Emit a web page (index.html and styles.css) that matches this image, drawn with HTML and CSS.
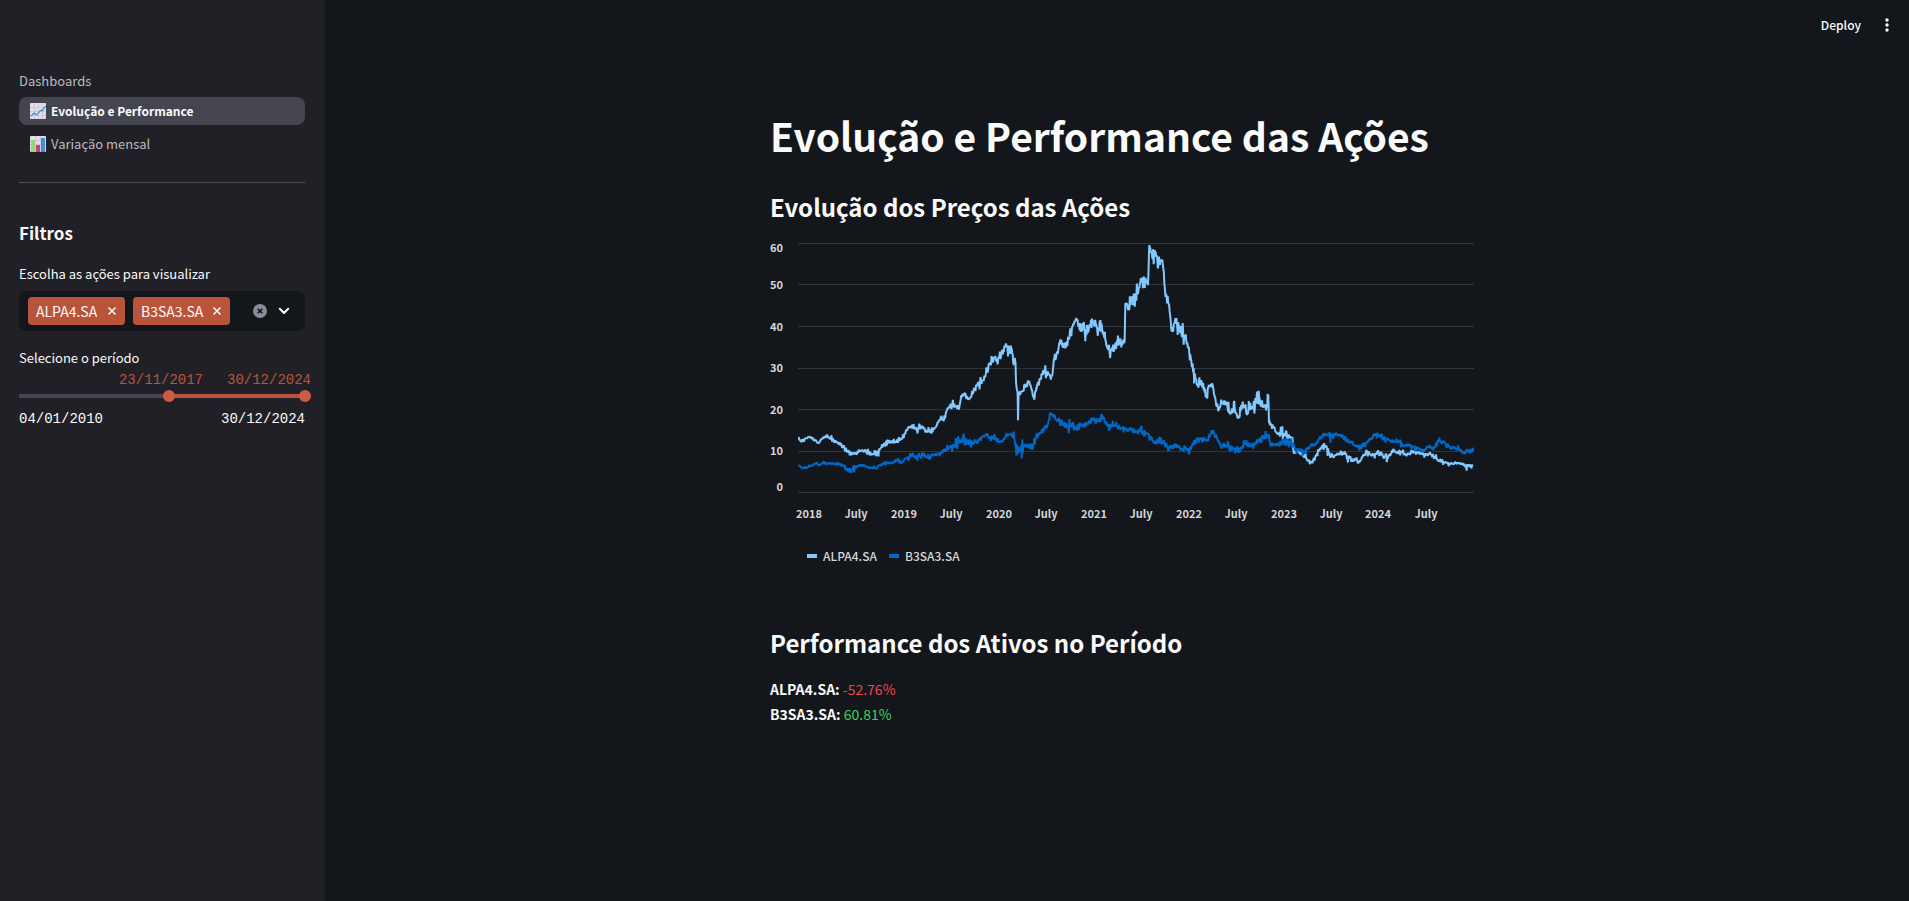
FILE: index.html
```html
<!DOCTYPE html>
<html lang="pt-BR">
<head>
<meta charset="utf-8">
<meta name="viewport" content="width=device-width, initial-scale=1">
<title>Evolução e Performance das Ações</title>
<link rel="stylesheet" href="styles.css">
</head>
<body>
<div class="app">
  <aside class="sidebar">
    <nav class="nav" aria-label="Dashboards">
      <span class="nav-heading">Dashboards</span>
      <a class="nav-link active" href="#evolucao">
        <svg class="emoji" viewBox="0 0 16 16" aria-hidden="true">
          <rect width="16" height="16" rx="1" fill="#e3dcea"/>
          <path d="M0 4.5h16M0 8.5h16M0 12.5h16M4.5 0v16M8.5 0v16M12.5 0v16" stroke="#c9bfd6" stroke-width=".7"/>
          <path d="M.8 13.4 4 10l2.6 1.8L11 7.2l1.2.6L15.6 3" fill="none" stroke="#3f86c8" stroke-width="1.2"/>
        </svg>
        <span>Evolução e Performance</span>
      </a>
      <a class="nav-link" href="#variacao">
        <svg class="emoji" viewBox="0 0 16 16" aria-hidden="true">
          <rect width="16" height="16" rx="1" fill="#e3dcea"/>
          <path d="M0 4.5h16M0 8.5h16M0 12.5h16M5.5 0v16M10.5 0v16" stroke="#c9bfd6" stroke-width=".7"/>
          <rect x="1" y="4" width="4" height="12" fill="#8fd77a"/>
          <rect x="6" y="9" width="4" height="7" fill="#d23a78"/>
          <rect x="11" y="2" width="4" height="14" fill="#3f8fd8"/>
        </svg>
        <span>Variação mensal</span>
      </a>
    </nav>
    <hr class="divider">
    <h2 class="filters-title">Filtros</h2>
    <label class="field-label" for="stocks">Escolha as ações para visualizar</label>
    <div class="multiselect">
      <span class="tag">ALPA4.SA
        <button class="tag-remove" type="button" aria-label="Remover ALPA4.SA"><svg viewBox="0 0 10 10"><path d="M1.5 1.5l7 7M8.5 1.5l-7 7"/></svg></button>
      </span>
      <span class="tag">B3SA3.SA
        <button class="tag-remove" type="button" aria-label="Remover B3SA3.SA"><svg viewBox="0 0 10 10"><path d="M1.5 1.5l7 7M8.5 1.5l-7 7"/></svg></button>
      </span>
      <input class="multiselect-input" id="stocks" type="text" autocomplete="off">
      <button class="icon-button" type="button" aria-label="Limpar">
        <svg viewBox="0 0 14 14"><circle cx="7" cy="7" r="7" fill="#8a8c9b"/><path d="M4.7 4.7l4.6 4.6M9.3 4.7L4.7 9.3" stroke="#13171b" stroke-width="1.6"/></svg>
      </button>
      <button class="icon-button" type="button" aria-label="Abrir opções">
        <svg viewBox="0 0 14 14"><path d="M2.8 4.8 7 9l4.2-4.2" fill="none" stroke="#fafafa" stroke-width="2" stroke-linecap="round" stroke-linejoin="round"/></svg>
      </button>
    </div>
    <span class="field-label period-label">Selecione o período</span>
    <div class="range-values"><span>23/11/2017</span><span>30/12/2024</span></div>
    <div class="range">
      <input class="range-input range-start" type="range" aria-label="Início do período" min="0" max="5474" value="2880">
      <input class="range-input" type="range" aria-label="Fim do período" min="0" max="5474" value="5474">
    </div>
    <div class="range-limits"><span>04/01/2010</span><span>30/12/2024</span></div>
  </aside>

  <div class="page">
    <header class="toolbar">
      <button class="toolbar-button" type="button">Deploy</button>
      <button class="toolbar-button menu-button" type="button" aria-label="Menu">
        <svg viewBox="0 0 4 14"><circle cx="2" cy="2" r="1.7"/><circle cx="2" cy="7" r="1.7"/><circle cx="2" cy="12" r="1.7"/></svg>
      </button>
    </header>
    <main class="content">
      <h1 class="title" id="evolucao">Evolução e Performance das Ações</h1>
      <h2 class="subtitle">Evolução dos Preços das Ações</h2>
      <svg class="chart" id="chart" viewBox="0 0 704 306" role="img" aria-label="Evolução dos preços">
        <g id="grid" class="grid"></g>
        <g transform="translate(-20 0) scale(.33333)" class="series">
          <path id="alpa" class="line-alpa"/>
          <path id="b3sa" class="line-b3sa"/>
        </g>
        <g id="labels" class="tick"></g>
      </svg>
      <ul class="legend">
        <li class="legend-item"><i class="swatch swatch-alpa"></i>ALPA4.SA</li>
        <li class="legend-item"><i class="swatch swatch-b3sa"></i>B3SA3.SA</li>
      </ul>
      <h2 class="subtitle performance-title">Performance dos Ativos no Período</h2>
      <p class="result"><strong>ALPA4.SA:</strong> <span class="down">-52.76%</span></p>
      <p class="result"><strong>B3SA3.SA:</strong> <span class="up">60.81%</span></p>
    </main>
  </div>
</div>
<script src="chart.js"></script>
</body>
</html>
```
FILE: chart.js
```js
const NS = 'http://www.w3.org/2000/svg';

function add(parent, name, attrs, text) {
  const node = document.createElementNS(NS, name);
  for (const key in attrs) node.setAttribute(key, attrs[key]);
  if (text) node.textContent = text;
  parent.appendChild(node);
}

// Small seeded generator, so that the daily variation is stable across loads.
function generator(seed) {
  return () => {
    seed = (seed * 1664525 + 1013904223) % 4294967296;
    return seed / 4294967296 - 0.5;
  };
}

// Points are x, y, daily variation; three units to a chart pixel.
function line(points, seed) {
  const random = generator(seed);
  let d = '';
  points.forEach(([x, y, spread], i) => {
    d += (i ? 'L' : 'M') + x + ' ' + y;
    const next = points[i + 1];
    if (!next) return;
    for (let at = x + 1.5; at < next[0]; at += 1.5) {
      const k = (at - x) / (next[0] - x);
      const r = random();
      const burst = Math.abs(r) > 0.46 ? 1.3 : 0.8;
      d += 'L' + at + ' ' + (y + (next[1] - y) * k + r * spread * burst).toFixed(1);
    }
  });
  return d;
}

const alpa = [
  [145,638,10],[155,650,8],[165,641,8],[178,635,8],[190,642,8],[205,655,8],[215,642,8],[231,631,12],[240,642,20],
  [255,648,14],[270,655,14],[280,668,24],[290,676,24],[300,685,22],[312,688,16],[330,677,8],[345,676,14],[360,683,14],
  [372,690,20],[378,690,24],[390,672,24],[400,662,26],[415,650,20],[430,652,16],[450,645,12],[460,635,10],[470,615,10],
  [483,604,16],[495,610,22],[505,612,20],[515,602,16],[525,617,16],[545,616,12],[555,608,12],[565,592,16],[573,576,18],
  [580,586,24],[590,558,14],[597,548,20],[607,537,22],[615,543,16],[627,553,14],[633,515,20],[647,508,24],[655,525,12],
  [665,508,26],[675,490,28],[690,475,28],[700,465,24],[710,440,30],[720,415,26],[730,402,30],[740,405,24],[748,400,28],
  [690+70,375,30],[690+78,358,40],[690+88,375,40],
  [690+95,370,30],[690+100,415,30],[690+105,405,40],[690+108,470,20],[690+113,510,10],[690+114,586,0],[690+116,505,20],
  [690+125,502,40],[690+135,488,20],[690+147,468,20],[690+155,495,24],[690+162,522,24],[690+170,492,24],[690+180,462,22],
  [690+193,438,30],[690+205,445,24],[690+217,450,14],[690+223,400,34],[690+232,380,34],[690+244,345,40],[690+258,365,40],
  [690+265,342,34],[690+276,305,24],[690+290,285,34],[690+302,320,40],[690+310,295,56],[690+318,320,50],[690+327,308,40],
  [690+338,290,26],[690+350,308,44],[690+360,300,50],[690+370,320,30],[690+380,362,34],[690+392,380,34],[690+405,365,36],
  [690+418,350,30],[690+434,345,30],[690+436,235,20],[690+448,255,60],[690+460,220,50],[690+472,205,40],[690+484,165,40],
  [690+495,165,24],[690+504,180,20],[690+508,60,16],[690+518,100,40],[690+527,80,40],[690+534,130,40],[690+541,105,30],
  [690+550,130,30],[690+557,215,40],[690+569,260,40],[690+575,320,24],[690+582,295,44],[690+590,290,50],[690+602,320,50],
  [690+613,330,40],[690+622,352,30],[690+632,400,44],[690+643,450,40],[690+652,480,34],[690+665,475,34],[690+679,515,40],
  [690+687,485,30],[690+696,475,30],[690+704,515,30],[690+716,555,30],[690+728,535,34],[690+738,532,36],[690+748,560,34],
  [1440+14,550,34],[1440+26,572,36],[1440+38,530,40],[1440+52,560,40],[1440+64,545,48],[1440+77,530,50],[1440+92,530,54],
  [1440+102,548,30],[1440+110,548,30],[1440+115,510,0],[1440+117,595,16],[1440+130,605,20],[1440+145,628,34],
  [1440+160,625,40],[1440+175,635,26],[1440+188,645,20],[1440+191,682,14],[1440+205,680,16],[1440+218,690,20],
  [1440+232,708,30],[1440+247,715,12],[1440+258,693,16],[1440+266,676,14],[1440+278,664,16],[1440+290,665,30],
  [1440+298,688,14],[1440+312,695,14],[1440+322,685,20],[1440+342,683,18],[1440+352,698,22],[1440+375,706,16],
  [1440+388,710,14],[1440+400,690,16],[1440+412,683,16],[1440+425,692,20],[1440+445,682,24],[1440+460,695,20],
  [1440+473,700,12],[1440+490,673,14],[1440+500,685,24],[1440+515,683,18],[1440+530,692,14],[1440+545,680,12],
  [1440+565,682,14],[1440+585,690,14],[1440+605,690,16],[1440+620,702,16],[1440+640,710,14],[1440+660,716,12],
  [1440+685,713,12],[1440+700,717,14],[1440+707,725,20],[1440+720,722,26],[1440+729,723,8]
];

const b3sa = [
  [145,722,8],[158,730,8],[180,724,8],[197,716,10],[207,720,10],[220,714,8],[240,716,10],[265,717,10],[280,724,20],
  [292,732,24],[305,736,18],[320,725,12],[340,721,10],[355,728,12],[370,731,14],[385,722,12],[400,718,12],[420,713,14],
  [440,708,14],[455,712,10],[470,700,16],[490,692,20],[505,695,16],[520,688,18],[530,698,28],[545,690,14],[565,688,16],
  [575,678,22],[590,675,22],[605,665,28],[620,655,28],[635,645,34],[650,652,24],[675,652,16],[690,638,16],[705,632,14],
  [720,636,16],[735,638,24],[748,650,14],[690+65,648,18],[690+78,634,14],
  [690+95,626,26],[690+103,640,44],[690+112,675,44],[690+121,680,44],[690+132,663,20],[690+145,662,22],[690+157,672,26],
  [690+168,640,20],[690+180,625,22],[690+195,610,20],[690+205,590,22],[690+211,565,18],[690+222,575,20],[690+235,588,34],
  [690+250,600,32],[690+265,604,34],[690+280,602,38],[690+295,608,34],[690+310,605,26],[690+325,592,26],[690+343,583,30],
  [690+358,590,32],[690+366,575,22],[690+380,598,22],[690+392,608,28],[690+410,600,16],[690+425,608,20],[690+445,615,24],
  [690+465,618,24],[690+485,620,20],[690+503,625,20],[690+518,648,20],[690+535,650,40],[690+550,648,26],[690+562,663,22],
  [690+575,668,22],[690+587,660,20],[690+603,673,28],[690+615,670,24],[690+628,680,14],[690+638,655,16],[690+650,643,20],
  [690+670,638,22],[690+680,648,24],[690+697,620,14],[690+712,642,14],[690+727,670,22],[690+740,662,24],
  [1440+8,668,20],[1440+28,680,16],[1440+42,655,20],[1440+58,660,24],[1440+75,655,22],[1440+92,640,24],[1440+117,630,26],
  [1440+121,660,16],[1440+140,660,28],[1440+155,655,34],[1440+170,650,22],[1440+187,655,20],[1440+197,675,16],
  [1440+215,675,20],[1440+228,680,14],[1440+240,664,18],[1440+262,652,18],[1440+275,635,20],[1440+288,628,34],
  [1440+302,632,18],[1440+325,627,16],[1440+342,645,20],[1440+360,650,16],[1440+375,662,18],[1440+392,666,20],
  [1440+408,652,18],[1440+425,642,16],[1440+434,625,20],[1440+450,632,22],[1440+470,640,18],[1440+490,650,18],
  [1440+505,648,24],[1440+525,660,16],[1440+545,664,16],[1440+560,670,16],[1440+578,677,16],[1440+598,665,16],
  [1440+612,670,14],[1440+625,648,16],[1440+642,650,16],[1440+655,667,14],[1440+675,668,18],[1440+690,675,14],
  [1440+704,686,20],[1440+715,675,16],[1440+729,678,8]
];

const grid = document.getElementById('grid');
[18, 59, 101, 143, 184, 226, 267].forEach(y => add(grid, 'line', { x1: 28, x2: 704, y1: y + 0.5, y2: y + 0.5 }));

const labels = document.getElementById('labels');
[23, 60, 102, 143, 185, 226, 262].forEach((y, i) =>
  add(labels, 'text', { x: 13, y: y + 4, 'text-anchor': 'end' }, String(60 - i * 10)));
['2018', 'July', '2019', 'July', '2020', 'July', '2021', 'July', '2022', 'July', '2023', 'July', '2024', 'July']
  .forEach((name, i) =>
    add(labels, 'text', { x: Math.round(39 + i * 47.45), y: 293, 'text-anchor': 'middle' }, name));

document.getElementById('alpa').setAttribute('d', line(alpa, 7));
document.getElementById('b3sa').setAttribute('d', line(b3sa, 21));
```
FILE: styles.css
```css
:root {
  --bg: #13171b;
  --panel: #212026;
  --text: #fafafa;
  --accent: #b9543b;
}

* { box-sizing: border-box; }

body {
  margin: 0;
  background: var(--bg);
  color: var(--text);
  font: 14px/24px "Noto Sans CJK JP", "Noto Sans", sans-serif;
}

h1, h2, p, ul { margin: 0; padding: 0; }

button {
  border: 0;
  padding: 0;
  background: none;
  color: inherit;
  font: inherit;
  cursor: pointer;
}

.app { display: flex; min-height: 100vh; }

.sidebar {
  flex: none;
  width: 325px;
  padding: 70px 20px 24px 19px;
  background: var(--panel);
}

.nav { display: flex; flex-direction: column; gap: 5px; }
.nav-heading { font-size: 13px; line-height: 22px; color: #bcbcbf; }
.nav-link {
  display: flex;
  align-items: center;
  gap: 5px;
  height: 28px;
  padding: 0 11px;
  border-radius: 8px;
  color: #bcbcbf;
  font-size: 13px;
  text-decoration: none;
}
.nav-link.active { background: #44454e; color: var(--text); font-size: 12px; font-weight: 700; }
.emoji { width: 16px; height: 16px; }

.divider { height: 1px; margin: 24px 0 0; border: 0; background: #4d4d55; }
.filters-title { margin: 38px 0 17px; font-size: 17px; line-height: 24px; font-weight: 700; }
.field-label { display: block; font-size: 13px; line-height: 24px; }

.multiselect {
  display: flex;
  align-items: center;
  gap: 8px;
  height: 40px;
  margin-top: 5px;
  padding: 0 14px 0 9px;
  border-radius: 8px;
  background: var(--bg);
}
.tag {
  display: flex;
  align-items: center;
  justify-content: space-between;
  width: 97px;
  height: 28px;
  padding: 0 8px;
  border-radius: 4px;
  background: var(--accent);
}
.tag-remove { display: flex; }
.tag-remove svg { width: 10px; height: 10px; stroke: #fafafa; stroke-width: 1.5; }
.multiselect-input {
  flex: 1;
  min-width: 0;
  width: 0;
  padding: 0;
  border: 0;
  outline: 0;
  background: none;
  color: inherit;
}
.icon-button { display: flex; margin-left: 2px; }
.icon-button svg { width: 14px; height: 14px; }

.period-label { margin-top: 15px; }
.range-values, .range-limits {
  display: flex;
  font: 14px/18px "Liberation Mono", monospace;
}
.range-values { justify-content: flex-end; gap: 24px; margin: 1px -6px 0 0; color: var(--accent); }
.range-limits { justify-content: space-between; margin-top: 8px; }

.range {
  display: grid;
  align-items: center;
  height: 12px;
  margin: 1px -6px 0;
  background: linear-gradient(90deg, #44454e 52%, var(--accent) 52%) center / calc(100% - 12px) 4px no-repeat;
}
.range-input {
  grid-area: 1 / 1;
  width: 100%;
  height: 12px;
  margin: 0;
  appearance: none;
  background: none;
  pointer-events: none;
}
.range-input::-webkit-slider-thumb {
  width: 12px;
  height: 12px;
  appearance: none;
  border-radius: 50%;
  background: #cb5c41;
  pointer-events: auto;
}

.page { flex: 1; min-width: 0; }
.toolbar {
  display: flex;
  align-items: center;
  justify-content: flex-end;
  gap: 24px;
  height: 49px;
  padding-right: 20px;
}
.toolbar-button { font-size: 12px; font-weight: 500; }
.menu-button svg { display: block; width: 4px; height: 14px; fill: var(--text); }

.content {
  max-width: 746px;
  margin: 0 auto;
  padding: 60px 16px 96px 26px;
}
.title { font-size: 39px; line-height: 52px; font-weight: 700; }
.subtitle { margin-top: 28px; font-size: 24px; line-height: 36px; font-weight: 700; }
.chart { display: block; width: 100%; }
.grid line { stroke: #30343a; }
.series path { fill: none; stroke-width: 6; stroke-linejoin: bevel; }
.line-alpa { stroke: #83c9ff; }
.line-b3sa { stroke: #0068c9; }
.tick { fill: #d5d6d9; font-size: 11px; font-weight: 700; }

.legend {
  display: flex;
  gap: 12px;
  margin: 13px 0 0 37px;
  list-style: none;
  color: #d5d6d9;
  font-size: 12px;
  line-height: 24px;
  font-weight: 500;
}
.legend-item { display: flex; align-items: center; gap: 6px; }
.swatch { width: 10px; height: 4px; }
.swatch-alpa { background: #83c9ff; }
.swatch-b3sa { background: #0068c9; }

.performance-title { margin: 57px 0 16px; }
.result { line-height: 25px; }
.down { color: #f0474c; }
.up { color: #3dd15f; }
```
